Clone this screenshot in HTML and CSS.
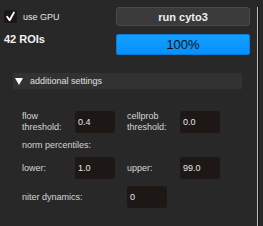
FILE: index.html
```html
<!DOCTYPE html>
<html lang="en">
<head>
    <meta charset="UTF-8">
    <meta name="viewport" content="width=device-width, initial-scale=1.0">
    <title>cyto3 panel</title>
    <link rel="stylesheet" href="styles.css">
</head>
<body>
    <div class="panel">
        <div class="row row-run">
            <label class="check">
                <span class="box">
                    <svg width="13" height="13" viewBox="0 0 13 13"><path d="M3.2 6.8 L5.6 10.2 L9.9 2.6" fill="none" stroke="#fff" stroke-width="1.9" stroke-linecap="round" stroke-linejoin="round"/></svg>
                </span>
                use GPU
            </label>
            <button class="run-btn">run cyto3</button>
        </div>
        <div class="row row-progress">
            <div class="rois">42 ROIs</div>
            <div class="progress">100%</div>
        </div>

        <div class="toggle">
            <span class="arrow"></span>
            additional settings
        </div>

        <div class="fields">
            <div class="label two">flow<br>threshold:</div>
            <div class="input">0.4</div>
            <div class="label two">cellprob<br>threshold:</div>
            <div class="input">0.0</div>

            <div class="label wide">norm percentiles:</div>

            <div class="label">lower:</div>
            <div class="input">1.0</div>
            <div class="label">upper:</div>
            <div class="input">99.0</div>

            <div class="label span2">niter dynamics:</div>
            <div class="input">0</div>
        </div>
    </div>
</body>
</html>
```

FILE: styles.css
```css
body {
    margin: 0;
    padding: 0;
    background-color: #282828;
    color: #dcdcdc;
    font-family: "Liberation Sans", Arial, sans-serif;
    font-size: 9px;
    overflow: hidden;
}
.panel {
    width: 258px;
    height: 226px;
    border-right: 1px solid #bdbdbd;
    box-shadow: 1px 0 0 #161616;
    box-sizing: border-box;
}
.row {
    display: grid;
    grid-template-columns: 112px 134px;
    padding-left: 4px;
}
.row-run {
    margin-top: 7px;
    height: 19px;
    align-items: center;
}
.row-progress {
    margin-top: 8px;
    height: 21px;
}
.check {
    display: flex;
    align-items: center;
    gap: 6px;
    font-size: 9px;
    color: #e6e6e6;
}
.box {
    width: 13px;
    height: 13px;
    background: #1c1715;
    border-radius: 2px;
    display: block;
}
.box svg {
    display: block;
}
.run-btn {
    height: 19px;
    margin: 0;
    padding: 0;
    background: #3b3b3b;
    border: 1px solid #4a4a4a;
    border-radius: 3px;
    color: #f0f0f0;
    font-family: inherit;
    font-size: 11px;
    font-weight: bold;
}
.rois {
    font-size: 11px;
    font-weight: bold;
    color: #f2f2f2;
    line-height: 13px;
    margin-top: -1px;
}
.progress {
    height: 21px;
    box-sizing: border-box;
    background: linear-gradient(#12a0ff, #0590fb);
    border: 1px solid #0b78d8;
    border-radius: 2px;
    color: #0e0e0e;
    font-size: 13px;
    line-height: 19px;
    text-align: center;
}
.toggle {
    margin: 18px 0 0 13px;
    width: 229px;
    height: 16px;
    background: #323232;
    display: flex;
    align-items: center;
    gap: 7px;
    padding-left: 2px;
    box-sizing: border-box;
    color: #e0e0e0;
}
.arrow {
    width: 0;
    height: 0;
    border-left: 4px solid transparent;
    border-right: 4px solid transparent;
    border-top: 7px solid #fafafa;
}
.fields {
    display: grid;
    grid-template-columns: 53px 52px 53px 40px;
    align-items: center;
    margin: 22px 0 0 22px;
}
.label {
    line-height: 11px;
    color: #d6d6d6;
}
.input {
    width: 40px;
    height: 22px;
    box-sizing: border-box;
    background: #1d1816;
    border-radius: 3px;
    padding-left: 3px;
    line-height: 22px;
    color: #e6e6e6;
}
.wide {
    grid-column: 1 / 5;
    margin: 6px 0 5px;
    line-height: 13px;
}
.span2 {
    grid-column: 1 / 3;
    margin-top: 7px;
}
.span2 + .input {
    margin-top: 7px;
}
```
